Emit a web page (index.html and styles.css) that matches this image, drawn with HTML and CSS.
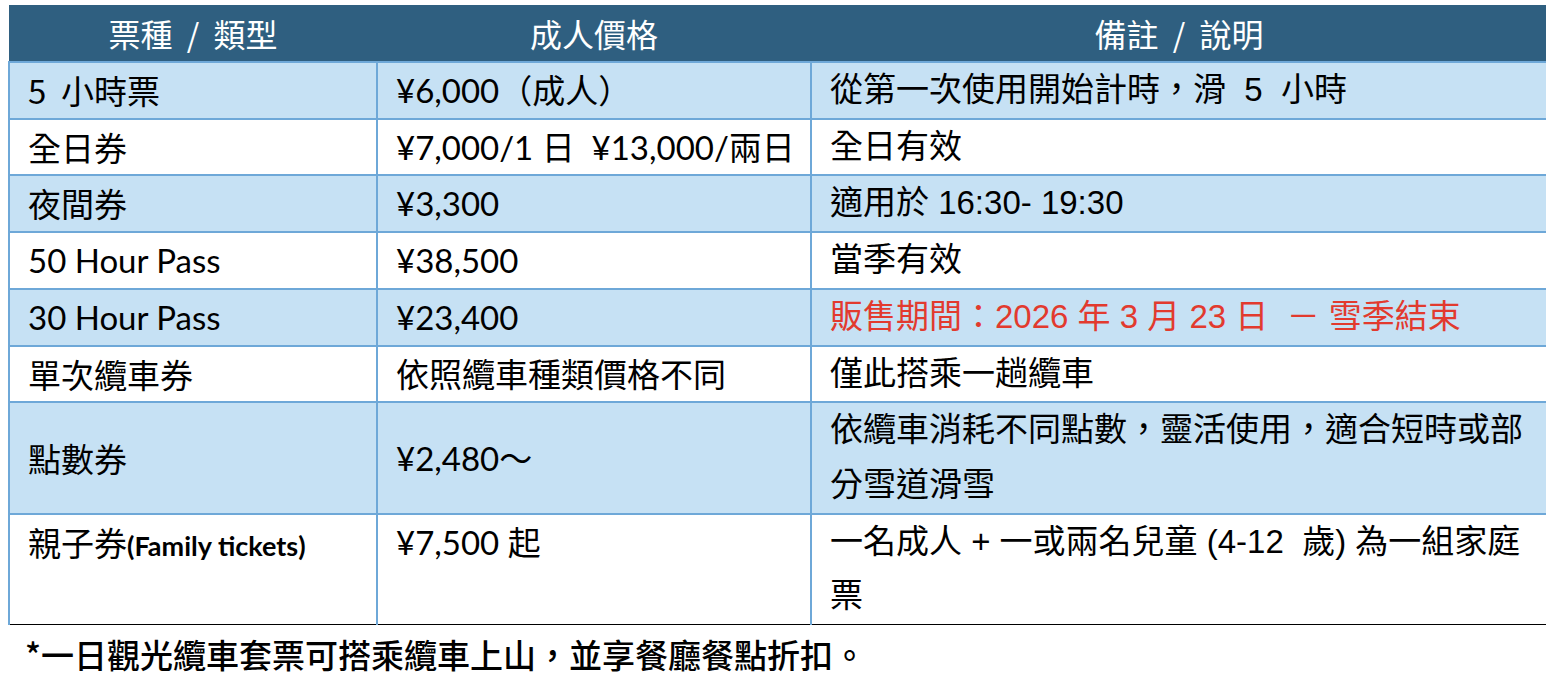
FILE: index.html
```html
<!DOCTYPE html>
<html lang="zh-Hant">
<head>
<meta charset="utf-8">
<link rel="stylesheet" href="styles.css">
</head>
<body>
<table class="tickets">
  <colgroup>
    <col class="c1"><col class="c2"><col class="c3">
  </colgroup>
  <thead>
    <tr><th>票種&nbsp; / &nbsp;類型</th><th>成人價格</th><th>備註&nbsp; / &nbsp;說明</th></tr>
  </thead>
  <tbody>
    <tr class="alt"><td>5&nbsp; 小時票</td><td class="price">¥6,000（成人）</td><td class="note">從第一次使用開始計時，滑&nbsp; 5&nbsp; 小時</td></tr>
    <tr><td>全日券</td><td class="price">¥7,000/1 日&nbsp; ¥13,000/兩日</td><td class="note">全日有效</td></tr>
    <tr class="alt"><td>夜間券</td><td class="price">¥3,300</td><td class="note">適用於 16:30- 19:30</td></tr>
    <tr><td class="latin">50 Hour Pass</td><td class="price">¥38,500</td><td class="note">當季有效</td></tr>
    <tr class="alt"><td class="latin">30 Hour Pass</td><td class="price">¥23,400</td><td class="note red">販售期間：2026 年 3 月 23 日 &nbsp;－ 雪季結束</td></tr>
    <tr><td>單次纜車券</td><td class="price">依照纜車種類價格不同</td><td class="note">僅此搭乘一趟纜車</td></tr>
    <tr class="alt"><td>點數券</td><td class="price">¥2,480～</td><td class="note">依纜車消耗不同點數，靈活使用，適合短時或部分雪道滑雪</td></tr>
    <tr class="top"><td>親子券<span class="fam">(Family tickets)</span></td><td class="price">¥7,500 起</td><td class="note">一名成人 + 一或兩名兒童 (4-12&nbsp; 歲) 為一組家庭票</td></tr>
  </tbody>
</table>
<p class="footnote">*一日觀光纜車套票可搭乘纜車上山，並享餐廳餐點折扣。</p>
</body>
</html>
```
FILE: styles.css
```css
html, body { background: #ffffff; }
body {
  margin: 5px 8px 0 8px;
  font-family: "Noto Sans CJK TC", "Noto Sans", sans-serif;
  color: #000;
}
.tickets {
  width: 1538px;
  border-collapse: collapse;
  table-layout: fixed;
  font-size: 33px;
}
.c1 { width: 368px; }
.c2 { width: 434px; }
.c3 { width: 736px; }
.tickets th {
  background: #2f5f80;
  color: #fff;
  font-weight: 400;
  height: 56px;
  padding: 0;
  line-height: 56px;
  text-align: center;
  font-size: 32px;
}
.tickets td {
  border: 2px solid #6ea8d8;
  padding: 0 4px 0 18px;
  line-height: 54.7px;
  vertical-align: middle;
  text-align: left;
}
.tickets tbody tr:last-child td { border-bottom: 1px solid #000; }
.tickets tr.alt td { background: #c6e1f4; }
.tickets tr.top td { vertical-align: top; }
.latin, .price { font-family: "Lato", "Noto Sans CJK TC", sans-serif; }
.fam { font-family: "Lato", sans-serif; font-weight: 700; font-size: 27px; }
.note { font-family: "Liberation Sans", "Noto Sans CJK TC", sans-serif; }
.red { color: #e23a2e; }
.footnote {
  margin: 9px 0 0 17px;
  font-size: 33px;
  font-weight: 500;
  line-height: 40px;
}
```
